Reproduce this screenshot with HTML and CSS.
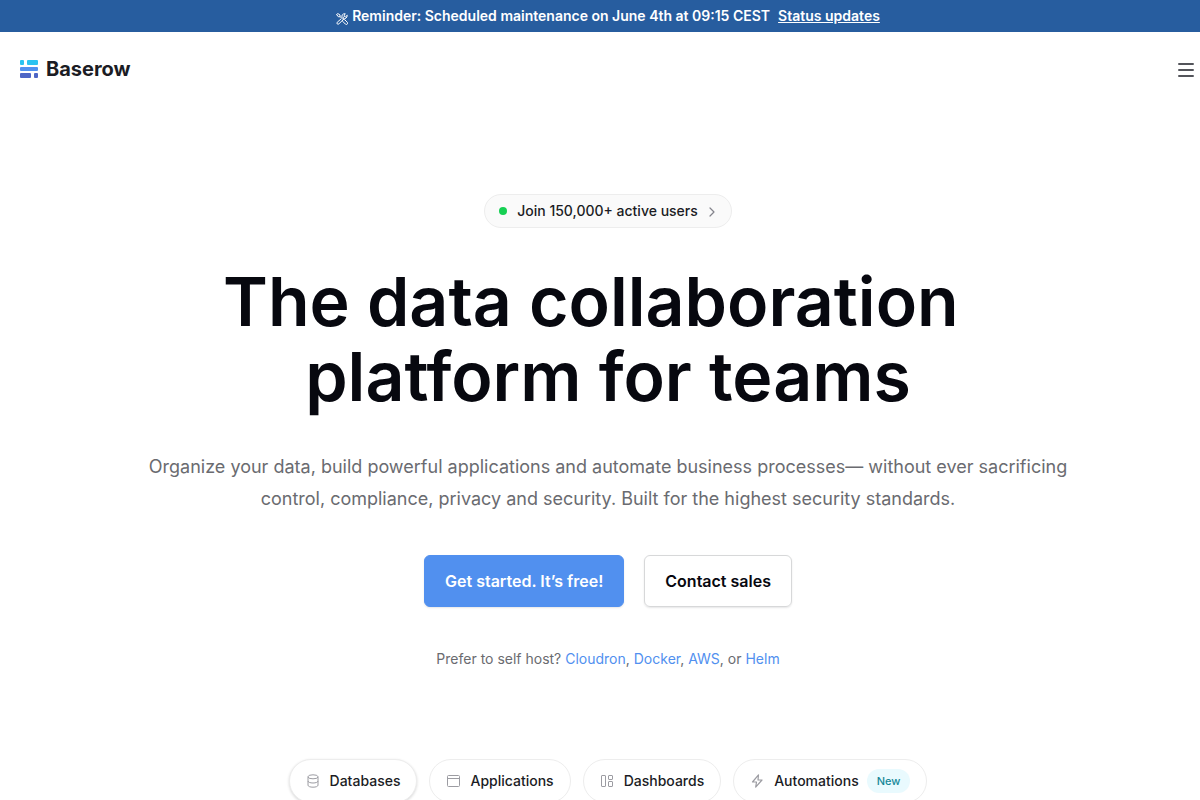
FILE: index.html
```html
<!DOCTYPE html>
<html lang="en">
<head>
    <meta charset="UTF-8">
    <meta name="viewport" content="width=device-width, initial-scale=1.0">
    <title>Baserow</title>
    <link rel="stylesheet" href="styles.css">
</head>
<body>
    <div class="page">
        <div class="banner">
            <svg class="banner-icon" viewBox="0 0 24 24" fill="none" stroke="currentColor" stroke-width="2" stroke-linejoin="round" stroke-linecap="round">
                <path d="M10 12 2.500 18.500a2.300 2.300 0 0 0 3.300 3.300L12.500 15"/>
                <path d="M14 9.500 17 6.500"/>
                <path d="M1.500 3 3.500 1 8 4v3l4 4M1.500 3 4.500 7.500H8"/>
                <path d="m15 13 2.500.5 5 5a2.500 2.500 0 0 1-3.700 3.700l-5-5L13 15z"/>
                <path d="M14 11.500c5 1 8.500-2 8.500-7l-3.500 3-3-2.500 2.500-3.500c-5-.5-8 3-6.500 7"/>
            </svg>
            <span>Reminder: Scheduled maintenance on June 4th at 09:15 CEST</span>
            <a class="banner-link" href="#">Status updates</a>
        </div>

        <header class="header">
            <a class="logo" href="#">
                <svg class="logo-mark" viewBox="0 0 18 18">
                    <rect x="0" y="0" width="4" height="5" rx="1" fill="#2bc3f1"/>
                    <rect x="7" y="0" width="11" height="5" rx="1" fill="#2bc3f1"/>
                    <rect x="0" y="7" width="18" height="4" rx="1" fill="#5190ef"/>
                    <rect x="0" y="13" width="11" height="5" rx="1" fill="#4e66c6"/>
                    <rect x="14" y="13" width="4" height="5" rx="1" fill="#4e66c6"/>
                </svg>
                <span>Baserow</span>
            </a>
            <button class="menu-button" type="button" aria-label="Menu">
                <svg class="menu-icon" viewBox="0 0 16 16" fill="none" stroke="currentColor" stroke-width="1.5" stroke-linecap="round"><path d="M.8 2h14.400M.8 8h14.400M.8 14h14.400"/></svg>
            </button>
        </header>

        <main class="hero">
            <a class="users" href="#">
                <span class="users-dot"></span>
                <span>Join 150,000+ active users</span>
                <svg class="users-arrow" viewBox="0 0 10 10" fill="none" stroke="currentColor" stroke-width="1.2" stroke-linecap="round" stroke-linejoin="round"><path d="m3 1 4 4-4 4"/></svg>
            </a>

            <h1>The data collaboration&nbsp;&nbsp;<br>platform for teams</h1>

            <p class="lead">Organize your data, build powerful applications and automate business processes— without ever sacrificing control, compliance, privacy and security. Built for the highest security standards.</p>

            <div class="actions">
                <a class="button button-primary" href="#">Get started. It’s free!</a>
                <a class="button" href="#">Contact sales</a>
            </div>

            <p class="self-host">Prefer to self host? <a href="#">Cloudron</a>, <a href="#">Docker</a>, <a href="#">AWS</a>, or <a href="#">Helm</a></p>

            <div class="tabs">
                <button class="tab tab-active" type="button">
                    <svg class="tab-icon" viewBox="0 0 14 14" fill="none" stroke="currentColor"><ellipse cx="7" cy="2.800" rx="5" ry="2"/><path d="M2 2.800v8.400c0 1.200 2.200 2 5 2s5-.8 5-2V2.800M2 7c0 1.200 2.200 2 5 2s5-.8 5-2"/></svg>
                    Databases
                </button>
                <button class="tab" type="button">
                    <svg class="tab-icon" viewBox="0 0 14 14" fill="none" stroke="currentColor"><rect x="1.500" y="1.500" width="12" height="11" rx="1"/><path d="M1.500 4.500h12"/></svg>
                    Applications
                </button>
                <button class="tab" type="button">
                    <svg class="tab-icon" viewBox="0 0 14 14" fill="none" stroke="currentColor"><rect x="1.500" y="1.500" width="4" height="11" rx=".5"/><rect x="8.500" y="1.500" width="4" height="4" rx=".5"/><rect x="8.500" y="7.500" width="4" height="5" rx=".5"/></svg>
                    Dashboards
                </button>
                <button class="tab" type="button">
                    <svg class="tab-icon" viewBox="0 0 14 14" fill="none" stroke="currentColor" stroke-width="1.2" stroke-linejoin="round"><path d="M8.500.8 2.500 8h4l-.8 5.200L12 6H8z"/></svg>
                    Automations
                    <span class="tab-badge">New</span>
                </button>
            </div>
        </main>
    </div>
</body>
</html>
```

FILE: styles.css
```css
* {
    box-sizing: border-box;
}
body {
    margin: 0;
    font-family: Inter, sans-serif;
    line-height: 20px;
    color: #1b1c24;
    background-color: #fff;
    overflow: hidden;
}
a {
    color: inherit;
    text-decoration: none;
}
.page {
    margin-right: -16px;
}
.banner {
    display: flex;
    align-items: center;
    justify-content: center;
    height: 32px;
    background-color: #275d9f;
    color: #fff;
    font-size: 14px;
    font-weight: 600;
}
.banner-icon {
    width: 12px;
    height: 12px;
    margin-top: 5px;
    margin-right: 4px;
}
.banner-link {
    margin-left: 8px;
    text-decoration: underline;
}
.header {
    display: flex;
    align-items: center;
    justify-content: space-between;
    height: 74px;
    padding: 0 20px;
}
.logo {
    display: flex;
    align-items: center;
    gap: 8px;
    font-size: 20px;
    font-weight: 700;
}
.logo-mark {
    width: 18px;
    height: 18px;
}
.menu-button {
    display: flex;
    padding: 2px 2px 0;
    border: none;
    background: none;
    color: #1b1c24;
}
.menu-icon {
    width: 16px;
    height: 16px;
}
.hero {
    display: flex;
    flex-direction: column;
    align-items: center;
    padding: 88px 20px 0;
    text-align: center;
}
.users {
    display: flex;
    align-items: center;
    height: 34px;
    padding: 0 14px;
    border: 1px solid #ededed;
    border-radius: 17px;
    background-color: #fafafa;
    font-size: 14px;
    font-weight: 500;
}
.users-dot {
    width: 8px;
    height: 8px;
    margin-right: 10px;
    border-radius: 50%;
    background-color: #16d053;
}
.users-arrow {
    width: 10px;
    height: 10px;
    margin-top: 2px;
    margin-left: 9px;
    color: #84848c;
}
h1 {
    margin: 36px 0 0;
    color: #07080f;
    font-size: 68px;
    font-weight: 600;
    line-height: 75px;
}
.lead {
    max-width: 940px;
    margin: 37px 0 0;
    color: #6a6b70;
    font-size: 18px;
    line-height: 32px;
}
.actions {
    display: flex;
    gap: 20px;
    margin-top: 40px;
}
.button {
    display: flex;
    align-items: center;
    height: 52px;
    padding: 0 20px;
    border: 1px solid #d7d8d9;
    border-radius: 6px;
    box-shadow: 0 1px 2px rgba(7, 8, 15, 0.1);
    color: #07080f;
    font-size: 16px;
    font-weight: 600;
}
.button-primary {
    border-color: #5190ef;
    background-color: #5190ef;
    color: #fff;
}
.self-host {
    margin: 42px 0 0;
    color: #6a6b70;
    font-size: 14px;
}
.self-host a {
    color: #5190ef;
}
.tabs {
    display: flex;
    gap: 12px;
    margin-top: 90px;
}
.tab {
    display: flex;
    align-items: center;
    height: 44px;
    padding: 0 16px;
    border: 1px solid #ededed;
    border-radius: 22px;
    background-color: #fff;
    color: #1b1c24;
    font-family: inherit;
    font-size: 14px;
    font-weight: 500;
    line-height: 20px;
}
.tab-active {
    box-shadow: 0 1px 3px rgba(7, 8, 15, 0.16);
}
.tab-icon {
    width: 14px;
    height: 14px;
    margin-right: 10px;
    color: #9c9ca2;
}
.tab-badge {
    margin-left: 8px;
    padding: 0 10px;
    border-radius: 12px;
    background-color: #e9fafe;
    color: #168899;
    font-size: 11px;
    line-height: 24px;
}
```
